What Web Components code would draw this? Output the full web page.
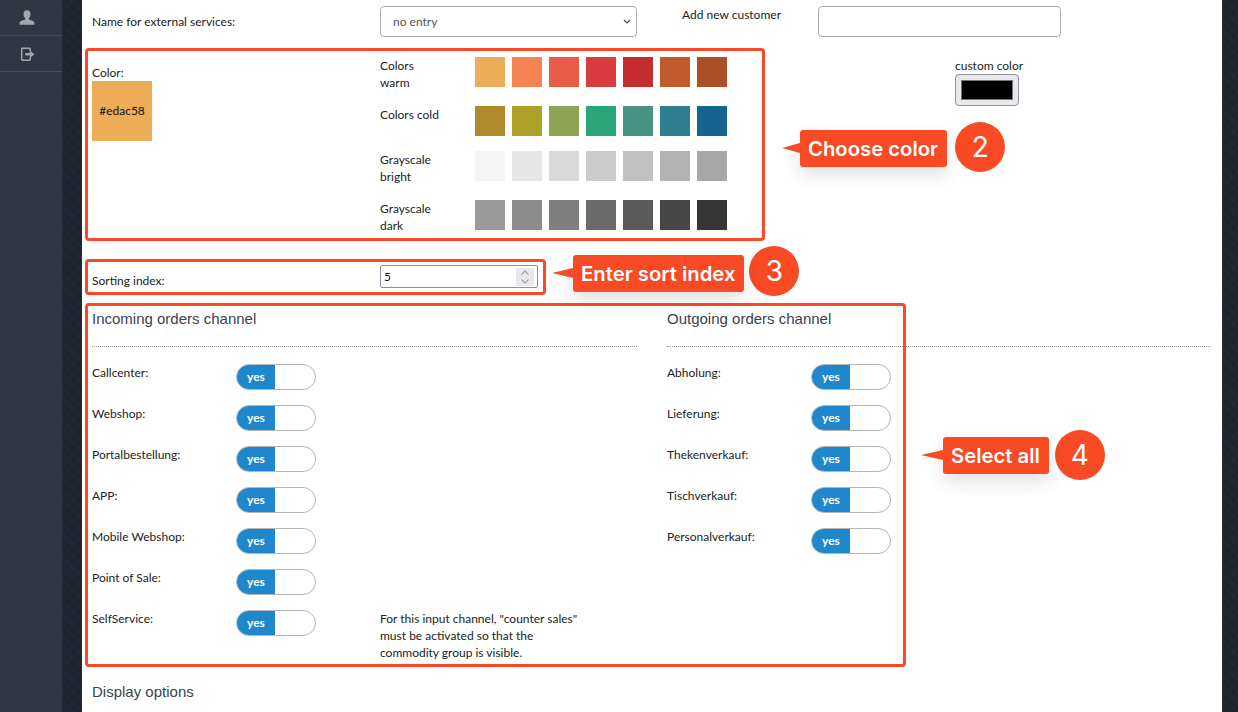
<!DOCTYPE html>
<html lang="en">
<head>
<meta charset="utf-8">
<title>Commodity group</title>
<style>
    html, body { margin: 0; height: 712px; overflow: hidden; }
    body {
        background-color: #1f2631;
        background-image: repeating-linear-gradient(45deg, rgba(255,255,255,.012) 0 4px, transparent 4px 8px), repeating-linear-gradient(-45deg, rgba(0,0,0,.04) 0 4px, transparent 4px 8px);
        font: 12px/17px Lato, "Liberation Sans", sans-serif;
        color: #222;
    }
</style>
</head>
<body>
<app-shell>
    <nav-rail slot="rail"></nav-rail>
    <main-panel>
        <form-row style="--cols: 288px 257px 45px 136px 243px; --top: 6px">
            <span class="mid">Name for external services:</span>
            <select-box>no entry</select-box>
            <span></span>
            <span>Add new customer</span>
            <text-box></text-box>
        </form-row>

        <color-section></color-section>

        <form-row style="--cols: 288px 158px; --top: 16px">
            <span class="low">Sorting index:</span>
            <number-box value="5"></number-box>
        </form-row>

        <channel-columns>
            <channel-list slot="left" heading="Incoming orders channel">
                <channel-row>Callcenter:</channel-row>
                <channel-row>Webshop:</channel-row>
                <channel-row>Portalbestellung:</channel-row>
                <channel-row>APP:</channel-row>
                <channel-row>Mobile Webshop:</channel-row>
                <channel-row>Point of Sale:</channel-row>
                <channel-row note='For this input channel, "counter sales"&#10;must be activated so that the&#10;commodity group is visible.'>SelfService:</channel-row>
            </channel-list>
            <channel-list slot="right" heading="Outgoing orders channel">
                <channel-row>Abholung:</channel-row>
                <channel-row>Lieferung:</channel-row>
                <channel-row>Thekenverkauf:</channel-row>
                <channel-row>Tischverkauf:</channel-row>
                <channel-row>Personalverkauf:</channel-row>
            </channel-list>
        </channel-columns>

        <section-heading style="margin-top: 31px">Display options</section-heading>

        <mark-frame style="left: 3px; top: 48px; width: 680px; height: 193px"></mark-frame>
        <mark-frame style="left: 3px; top: 259px; width: 461px; height: 36px"></mark-frame>
        <mark-frame style="left: 3px; top: 303px; width: 821px; height: 364px"></mark-frame>

        <note-callout number="2" style="left: 700px; top: 122px; --tail: 18px; --gap: 8px; --drop: 2px">Choose color</note-callout>
        <note-callout number="3" style="left: 470px; top: 246px; --tail: 21px; --gap: 5px; --drop: 3px">Enter sort index</note-callout>
        <note-callout number="4" style="left: 839px; top: 430px; --tail: 22px; --gap: 6px; --drop: 1px">Select all</note-callout>
    </main-panel>
</app-shell>

<script>
class AppShell extends HTMLElement {
    constructor() {
        super();
        this.attachShadow({ mode: 'open' });
        this.shadowRoot.innerHTML = `
            <style>
                :host { display: flex; height: 712px; overflow: hidden; }
                .rail { width: 62px; flex: none; }
                .body { margin-left: 20px; width: 1140px; flex: none; }
            </style>
            <div class="rail"><slot name="rail"></slot></div>
            <div class="body"><slot></slot></div>
        `;
    }
}

class NavRail extends HTMLElement {
    constructor() {
        super();
        this.attachShadow({ mode: 'open' });
        this.shadowRoot.innerHTML = `
            <style>
                :host { display: block; height: 712px; background: #303742; }
                a { display: flex; height: 35px; align-items: center; justify-content: center; border-bottom: 1px solid #454c57; padding-right: 8px; }
                svg { display: block; fill: #a3a6ab; }
                .user { width: 18px; height: 18px; }
                .exit { width: 16.500px; height: 16.500px; margin-top: 2px; }
            </style>
            <a>
                <svg class="user" viewBox="0 0 16 16"><path d="M8 1.200c2 0 3.100 1.500 3.100 3.400 0 1.500-.6 2.900-1.500 3.700v1.100c1.700.7 4.600 1.200 5 2.700V14H1.400v-1.900c.4-1.500 3.300-2 5-2.700V8.300C5.500 7.500 4.900 6.100 4.900 4.600 4.900 2.700 6 1.200 8 1.200z"/></svg>
            </a>
            <a>
                <svg class="exit" viewBox="0 0 16 16"><path d="M3.500 1.500h6.500c1 0 1.600.6 1.600 1.600v2h-1.500V3.400c0-.3-.2-.4-.4-.4H3.800c-.3 0-.4.2-.4.4v9.200c0 .3.200.4.400.4h5.900c.3 0 .4-.2.400-.4v-1.700h1.500v2c0 1-.6 1.600-1.600 1.600H3.500c-1 0-1.600-.6-1.600-1.600V3.100c0-1 .6-1.600 1.600-1.600z"/><path d="M6 6.700h4.500V4.400L15 8l-4.500 3.600V9.300H6z"/></svg>
            </a>
        `;
    }
}

class MainPanel extends HTMLElement {
    constructor() {
        super();
        this.attachShadow({ mode: 'open' });
        this.shadowRoot.innerHTML = `
            <style>
                :host { display: block; position: relative; height: 712px; box-sizing: border-box; padding: 0 11px 0 10px; background: #fff; overflow: hidden; }
            </style>
            <slot></slot>
        `;
    }
}

class FormRow extends HTMLElement {
    constructor() {
        super();
        this.attachShadow({ mode: 'open' });
        this.shadowRoot.innerHTML = `
            <style>
                :host { display: grid; grid-template-columns: var(--cols); margin-top: var(--top, 0); }
                ::slotted(.mid) { align-self: center; }
                ::slotted(.low) { align-self: end; line-height: 15px; }
            </style>
            <slot></slot>
        `;
    }
}

class SelectBox extends HTMLElement {
    constructor() {
        super();
        this.attachShadow({ mode: 'open' });
        this.shadowRoot.innerHTML = `
            <style>
                :host { display: flex; align-items: center; justify-content: space-between; box-sizing: border-box; height: 31px; padding: 0 4px 0 12px; border: 1px solid #aaa; border-radius: 4px; color: #555; }
                svg { width: 10px; height: 8px; fill: none; stroke: #444; stroke-width: 1.200; }
            </style>
            <slot></slot>
            <svg viewBox="0 0 10 8"><path d="M2 2l3 3 3-3"/></svg>
        `;
    }
}

class TextBox extends HTMLElement {
    constructor() {
        super();
        this.attachShadow({ mode: 'open' });
        this.shadowRoot.innerHTML = `
            <style>
                :host { display: block; }
                input { display: block; box-sizing: border-box; width: 100%; height: 31px; border: 1px solid #aaa; border-radius: 4px; background: #fff; padding: 0 12px; outline: none; }
            </style>
            <input type="text">
        `;
    }
}

class NumberBox extends HTMLElement {
    constructor() {
        super();
        this.attachShadow({ mode: 'open' });
        this.shadowRoot.innerHTML = `
            <style>
                :host { display: flex; align-items: center; justify-content: space-between; box-sizing: border-box; height: 23px; padding: 0 3px 0 3px; border: 1px solid #8f8f9d; border-radius: 2px; color: #111; }
                .spin { width: 18px; height: 18px; background: #e9e9ed; display: block; }
                svg { display: block; width: 18px; height: 18px; fill: none; stroke: #a0a0a8; stroke-width: 1.200; }
            </style>
            <span>${this.getAttribute('value')}</span>
            <span class="spin"><svg viewBox="0 0 18 18"><path d="M5.500 6.500L9 3l3.500 3.500M5.500 11.500L9 15l3.500-3.500"/></svg></span>
        `;
    }
}

const PALETTES = [
    { label: 'Colors<br>warm', colors: ['#edac58', '#f48552', '#eb5c48', '#d93c3f', '#c52c2e', '#c35a2c', '#ab5026'] },
    { label: 'Colors cold', colors: ['#ae8a2a', '#aea12a', '#8ea453', '#2ba57a', '#479384', '#2e8090', '#15648f'] },
    { label: 'Grayscale<br>bright', colors: ['#f5f5f5', '#e6e6e6', '#d9d9d9', '#cccccc', '#c0c0c0', '#b3b3b3', '#a6a6a6'] },
    { label: 'Grayscale<br>dark', colors: ['#9a9a9a', '#8c8c8c', '#7f7f7f', '#6b6b6b', '#5a5a5a', '#474747', '#363636'] },
];

class ColorSection extends HTMLElement {
    constructor() {
        super();
        this.attachShadow({ mode: 'open' });
        const rows = PALETTES.map(p => `
            <div class="row">
                <div class="name">${p.label}</div>
                ${p.colors.map(c => `<i style="background:${c}"></i>`).join('')}
            </div>`).join('');
        this.shadowRoot.innerHTML = `
            <style>
                :host { display: grid; grid-template-columns: 288px 347px 228px 1fr; margin-top: 20px; }
                .current { padding-top: 7px; }
                .chip { width: 60px; height: 60px; padding-bottom: 2px; box-sizing: border-box; background: #edac58; display: flex; align-items: center; justify-content: center; color: #111; }
                .row { display: flex; gap: 7px; margin-bottom: 15px; min-height: 30px; }
                .name { width: 88px; }
                i { display: block; width: 30px; height: 30px; flex: none; }
                input { display: block; box-sizing: border-box; width: 64px; height: 32px; padding: 0; border: 1px solid #8f8f9d; border-radius: 4px; background: #e9e9ed; }
                input::-webkit-color-swatch-wrapper { padding: 5px; }
                input::-webkit-color-swatch { border: 1px solid #777; border-radius: 0; }
                .custom { line-height: 17px; }
            </style>
            <div class="current">Color:<div class="chip">#edac58</div></div>
            <div>${rows}</div>
            <span></span>
            <div class="custom">custom color<input type="color" value="#000000"></div>
        `;
    }
}

class ChannelColumns extends HTMLElement {
    constructor() {
        super();
        this.attachShadow({ mode: 'open' });
        this.shadowRoot.innerHTML = `
            <style>
                :host { display: grid; grid-template-columns: 545px 544px; column-gap: 30px; margin-top: 21px; }
            </style>
            <slot name="left"></slot>
            <slot name="right"></slot>
        `;
    }
}

class SectionHeading extends HTMLElement {
    constructor() {
        super();
        this.attachShadow({ mode: 'open' });
        this.shadowRoot.innerHTML = `
            <style>
                :host { display: block; font: 15px/20px "Liberation Sans", Arial, sans-serif; color: #3a4250; }
            </style>
            <slot></slot>
        `;
    }
}

class ChannelList extends HTMLElement {
    constructor() {
        super();
        this.attachShadow({ mode: 'open' });
        this.shadowRoot.innerHTML = `
            <style>
                :host { display: block; }
                hr { border: 0; border-top: 1px dotted #999; margin: 17px 0 17px; }
            </style>
            <section-heading>${this.getAttribute('heading')}</section-heading>
            <hr>
            <slot></slot>
        `;
    }
}

class ChannelRow extends HTMLElement {
    constructor() {
        super();
        this.attachShadow({ mode: 'open' });
        const note = this.getAttribute('note');
        this.shadowRoot.innerHTML = `
            <style>
                :host { display: grid; grid-template-columns: 144px 144px 1fr; height: 41px; }
                .note { white-space: pre-line; height: 51px; }
            </style>
            <div><slot></slot></div>
            <toggle-switch></toggle-switch>
            ${note ? `<div class="note">${note}</div>` : ''}
        `;
    }
}

class ToggleSwitch extends HTMLElement {
    constructor() {
        super();
        this.attachShadow({ mode: 'open' });
        this.shadowRoot.innerHTML = `
            <style>
                :host { display: block; box-sizing: border-box; width: 80px; height: 26px; border: 1px solid #b5b5b5; border-radius: 13px; overflow: hidden; background: #fff; }
                span { display: flex; align-items: center; justify-content: center; box-sizing: border-box; width: 38px; height: 100%; padding-bottom: 2px; background: #1f88cd; color: #fff; font-weight: 700; font-size: 12px; }
            </style>
            <span>yes</span>
        `;
    }
}

class MarkFrame extends HTMLElement {
    constructor() {
        super();
        this.attachShadow({ mode: 'open' });
        this.shadowRoot.innerHTML = `
            <style>
                :host { display: block; position: absolute; box-sizing: border-box; border: 3px solid #f74a25; border-radius: 4px; pointer-events: none; }
            </style>
        `;
    }
}

class NoteCallout extends HTMLElement {
    constructor() {
        super();
        this.attachShadow({ mode: 'open' });
        this.shadowRoot.innerHTML = `
            <style>
                :host { display: flex; position: absolute; align-items: flex-start; gap: var(--gap, 8px); height: 50px; font-family: Inter, "Liberation Sans", sans-serif; color: #fff; }
                .bubble { position: relative; display: block; height: 37px; margin: calc(6px + var(--drop, 0px)) 0 0 var(--tail, 18px); padding: 0 9px 0 8px; background: #f74a25; border-radius: 3px; font-size: 20.3px; line-height: 37px; font-weight: 600; box-shadow: 0 8px 18px rgba(0,0,0,.12); white-space: nowrap; }
                .bubble::before { content: ''; position: absolute; left: calc(0px - var(--tail, 18px)); top: 13px; width: var(--tail, 18px); height: 10px; background: #f74a25; clip-path: polygon(0 50%, 100% 0, 100% 100%); }
                .num { width: 50px; height: 50px; border-radius: 50%; background: #f74a25; text-align: center; font-size: 28px; line-height: 50px; }
            </style>
            <span class="bubble"><slot></slot></span>
            <span class="num">${this.getAttribute('number')}</span>
        `;
    }
}

customElements.define('app-shell', AppShell);
customElements.define('nav-rail', NavRail);
customElements.define('main-panel', MainPanel);
customElements.define('form-row', FormRow);
customElements.define('select-box', SelectBox);
customElements.define('text-box', TextBox);
customElements.define('number-box', NumberBox);
customElements.define('color-section', ColorSection);
customElements.define('channel-columns', ChannelColumns);
customElements.define('section-heading', SectionHeading);
customElements.define('channel-list', ChannelList);
customElements.define('channel-row', ChannelRow);
customElements.define('toggle-switch', ToggleSwitch);
customElements.define('mark-frame', MarkFrame);
customElements.define('note-callout', NoteCallout);
</script>
</body>
</html>
